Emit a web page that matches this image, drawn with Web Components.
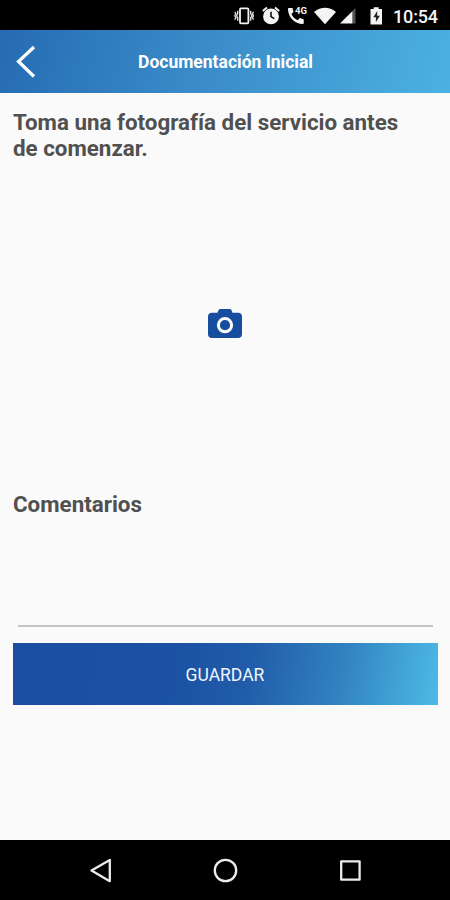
<!DOCTYPE html>
<html lang="es">
<head>
  <meta charset="UTF-8">
  <meta name="viewport" content="width=device-width, initial-scale=1">
  <title>Documentación Inicial</title>
  <style>
    body {
      margin: 0;
      background: #fafafa;
      font-family: Roboto, "Liberation Sans", sans-serif;
    }
  </style>
</head>
<body>
  <app-screen>
    <status-bar slot="status">10:54</status-bar>
    <app-header slot="header">Documentación Inicial</app-header>
    <photo-picker>Toma una fotografía del servicio antes de comenzar.</photo-picker>
    <comment-field>Comentarios</comment-field>
    <gradient-button>GUARDAR</gradient-button>
    <navigation-bar slot="navigation"></navigation-bar>
  </app-screen>

  <script>
    class AppScreen extends HTMLElement {
      constructor() {
        super();
        this.attachShadow({ mode: "open" });
      }

      connectedCallback() {
        this.shadowRoot.innerHTML = `
          <style>
            :host {
              display: flex;
              flex-direction: column;
              height: 900px;
              overflow: hidden;
              background: #fafafa;
            }

            main {
              flex: 1;
              min-height: 0;
              display: flex;
              flex-direction: column;
              padding: 0 12px 0 13px;
            }
          </style>
          <slot name="status"></slot>
          <slot name="header"></slot>
          <main><slot></slot></main>
          <slot name="navigation"></slot>
        `;
      }
    }

    class StatusBar extends HTMLElement {
      constructor() {
        super();
        this.attachShadow({ mode: "open" });
      }

      connectedCallback() {
        this.shadowRoot.innerHTML = `
          <style>
            :host {
              display: flex;
              align-items: center;
              box-sizing: border-box;
              height: 30px;
              padding-left: 234px;
              background: #000;
              color: #f4f4f4;
            }

            svg {
              flex: none;
              height: 30px;
              fill: #f4f4f4;
            }

            .vibrate, .alarm { margin-right: 8px; }
            .phone { margin-right: 6px; }
            .wifi { margin-right: 4px; }
            .signal { margin-right: 13px; }
            .battery { margin-right: 10px; }

            .time {
              font-size: 18px;
              font-weight: 500;
              line-height: 30px;
              padding-top: 3px;
              letter-spacing: -0.15px;
              white-space: nowrap;
            }
          </style>
          <svg class="vibrate" width="20" viewBox="0 0 20 30">
            <rect x="6" y="8.300" width="8.400" height="15" rx="1" fill="none" stroke="#f4f4f4" stroke-width="1.800"/>
            <path d="M3.700 10.800v2.700l-1 2.200 1 2.200v2.900M.8 11.800l1 1.900-1 2 1 2-1 2M16.700 10.800v2.700l1 2.200-1 2.200v2.900M19.500 11.800l-1 1.900 1 2-1 2 1 2" fill="none" stroke="#ddd" stroke-width="1.400"/>
          </svg>
          <svg class="alarm" width="18" viewBox="0 0 18 30">
            <path d="M.8 11 5 7.500M17.200 11 13 7.500" stroke="#f4f4f4" stroke-width="1.900"/>
            <circle cx="9" cy="16.400" r="7.900"/>
            <path d="M9 11.700v5l3.300 2" fill="none" stroke="#000" stroke-width="1.500"/>
          </svg>
          <svg class="phone" width="20" viewBox="0 0 20 30">
            <path d="M1 8h3.500l1 4-2.100 2.100c1.300 2.800 3.400 4.900 6.200 6.200l2.100-2.200 4 1.100V23c0 .7-.4 1-1 1C6.900 24 0 17.300 0 9c0-.6.4-1 1-1Z"/>
            <text x="7" y="14.200" font-family="Roboto, sans-serif" font-size="9" font-weight="700" textLength="12" lengthAdjust="spacingAndGlyphs">4G</text>
          </svg>
          <svg class="wifi" width="22" viewBox="0 0 22 30">
            <path d="M0 12Q11 3.700 22 12L11 24.200Z"/>
          </svg>
          <svg class="signal" width="17" viewBox="0 0 17 30">
            <path d="M15.500 8v15.500H12V11.500Z" fill="#555"/>
            <path d="M0 23.500 12.300 11.200v12.300Z"/>
          </svg>
          <svg class="battery" width="13" viewBox="0 0 13 30">
            <path d="M.5 9h3.200V7.300h5V9H12v15.500H.5Z"/>
            <path d="M7.200 11 3.300 17.200h2.600V22l4-6.200H7.200Z" fill="#222"/>
          </svg>
          <span class="time"><slot></slot></span>
        `;
      }
    }

    class AppHeader extends HTMLElement {
      constructor() {
        super();
        this.attachShadow({ mode: "open" });
      }

      connectedCallback() {
        this.shadowRoot.innerHTML = `
          <style>
            :host {
              display: grid;
              grid-template-columns: 50px 1fr 50px;
              align-items: center;
              height: 63px;
              background: linear-gradient(105deg, #266bb4 0%, #3c8fca 50%, #4bb1e2 100%);
              color: #fff;
            }

            button {
              display: block;
              height: 63px;
              padding: 0;
              border: 0;
              background: none;
            }

            svg {
              display: block;
            }

            .title {
              padding-left: 1px;
              font-size: 17.5px;
              font-weight: 700;
              text-align: center;
              white-space: nowrap;
            }
          </style>
          <button aria-label="Volver">
            <svg width="50" height="63" viewBox="0 0 50 63" fill="none" stroke="#fff" stroke-width="3.200">
              <path d="M34 17 18.500 31.500 34 46.500"/>
            </svg>
          </button>
          <span class="title"><slot></slot></span>
        `;
      }
    }

    class PhotoPicker extends HTMLElement {
      constructor() {
        super();
        this.attachShadow({ mode: "open" });
      }

      connectedCallback() {
        this.shadowRoot.innerHTML = `
          <style>
            :host {
              display: block;
              height: 397px;
            }

            .message {
              padding: 16px 20px 0 0;
              color: #505050;
              font-size: 22.35px;
              font-weight: 700;
              line-height: 26px;
            }

            .preview {
              display: flex;
              justify-content: center;
              padding: 148px 2px 0 0;
            }

            svg {
              display: block;
            }
          </style>
          <div class="message"><slot></slot></div>
          <div class="preview">
            <svg width="34" height="30" viewBox="0 0 34 30">
              <path d="M4 3.800h5.500L10.500 1.300Q11 0 12.500 0h9Q23 0 23.500 1.300l1 2.500H30q4 0 4 4V25q0 4-4 4H4q-4 0-4-4V7.800q0-4 4-4Z" fill="#174d9f"/>
              <circle cx="17" cy="16.200" r="6.600" fill="none" stroke="#fafafa" stroke-width="3"/>
            </svg>
          </div>
        `;
      }
    }

    class CommentField extends HTMLElement {
      constructor() {
        super();
        this.attachShadow({ mode: "open" });
      }

      connectedCallback() {
        this.shadowRoot.innerHTML = `
          <style>
            :host {
              display: block;
              height: 153px;
            }

            label {
              display: block;
              color: #505050;
              font-size: 22.35px;
              font-weight: 700;
              line-height: 28px;
            }

            textarea {
              display: block;
              box-sizing: border-box;
              width: 415px;
              height: 109px;
              margin: 0 5px;
              padding: 8px 0;
              border: 0;
              border-bottom: 2px solid #c4c4c4;
              background: none;
              font: 18px Roboto, sans-serif;
              resize: none;
              outline: none;
            }
          </style>
          <label for="comments"><slot></slot></label>
          <textarea id="comments"></textarea>
        `;
      }
    }

    class GradientButton extends HTMLElement {
      constructor() {
        super();
        this.attachShadow({ mode: "open" });
      }

      connectedCallback() {
        this.shadowRoot.innerHTML = `
          <style>
            :host {
              display: block;
            }

            button {
              display: block;
              width: 100%;
              height: 62px;
              padding: 2px 1px 0 0;
              border: 0;
              background: linear-gradient(100deg, #194fa1 0%, #1b52a3 38%, #205ca9 55%, #3181bf 76%, #4dbae6 100%);
              color: #f0f5ff;
              font: 400 17.500px Roboto, sans-serif;
            }
          </style>
          <button><slot></slot></button>
        `;
      }
    }

    class NavigationBar extends HTMLElement {
      constructor() {
        super();
        this.attachShadow({ mode: "open" });
      }

      connectedCallback() {
        this.shadowRoot.innerHTML = `
          <style>
            :host {
              display: flex;
              align-items: center;
              justify-content: space-between;
              box-sizing: border-box;
              height: 60px;
              padding: 0 87px;
              background: #000;
            }

            svg {
              fill: none;
              stroke: #ececec;
              stroke-width: 2.300;
              stroke-linejoin: round;
            }
          </style>
          <svg width="26" height="26" viewBox="0 0 26 26"><path d="M4.500 13.500 22.800 2.900v21.300Z"/></svg>
          <svg width="26" height="26" viewBox="0 0 26 26"><circle cx="13.500" cy="13.500" r="10.700"/></svg>
          <svg width="26" height="26" viewBox="0 0 26 26"><path d="M4.200 4.300h18.400v18.400H4.200Z"/></svg>
        `;
      }
    }

    customElements.define("app-screen", AppScreen);
    customElements.define("status-bar", StatusBar);
    customElements.define("app-header", AppHeader);
    customElements.define("photo-picker", PhotoPicker);
    customElements.define("comment-field", CommentField);
    customElements.define("gradient-button", GradientButton);
    customElements.define("navigation-bar", NavigationBar);
  </script>
</body>
</html>
